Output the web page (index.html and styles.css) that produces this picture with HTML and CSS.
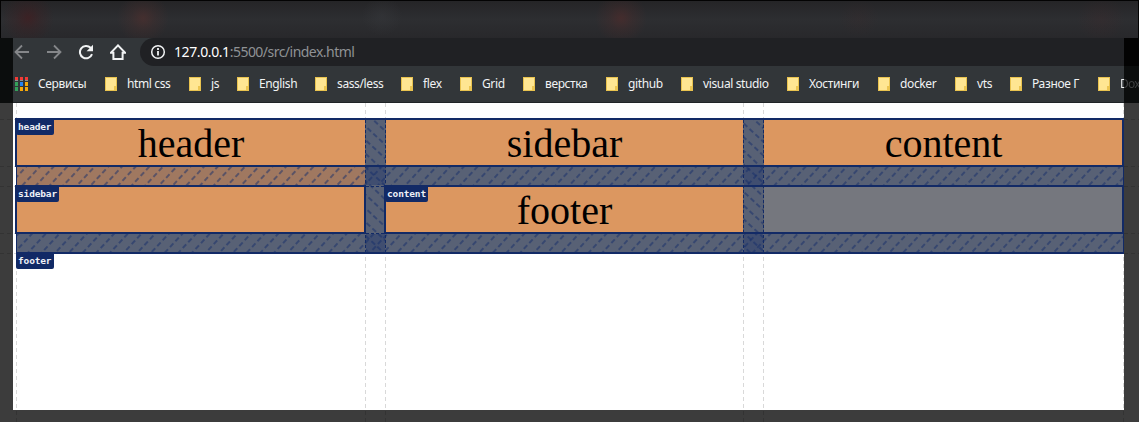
FILE: index.html
```html
<!DOCTYPE html>
<html lang="ru">
<head>
<meta charset="utf-8">
<title>Grid</title>
<link rel="stylesheet" href="styles.css">
</head>
<body>
<div class="screen">
  <div class="tabstrip"></div>
  <div class="stage">
    <div class="side side-left"></div>
    <div class="window">
      <div class="toolbar">
        <svg class="nav" width="16" height="16" viewBox="0 0 16 16" fill="none" stroke="#85878a" stroke-width="1.8"><path d="M15 8H2M8 1.5 1.5 8 8 14.5"/></svg>
        <svg class="nav" width="16" height="16" viewBox="0 0 16 16" fill="none" stroke="#85878a" stroke-width="1.8"><path d="M1 8h13M8 1.5 14.5 8 8 14.5"/></svg>
        <svg class="nav" width="16" height="16" viewBox="0 0 16 16" fill="none" stroke="#f1f3f4" stroke-width="2"><path d="M14 10.2A6.200 6.200 0 1 1 12.600 3.800L14 5.200"/><path d="M15 .8v6.400H8.600z" fill="#f1f3f4" stroke="none"/></svg>
        <svg class="nav" width="16" height="16" viewBox="0 0 16 16" fill="none" stroke="#f1f3f4" stroke-width="2"><path d="M.8 8.800H3.400V15H12.600V8.800H15.200L8 1.400z"/></svg>
        <div class="address">
          <svg width="16" height="16" viewBox="0 0 16 16" fill="none" stroke="#f1f3f4"><circle cx="8" cy="8" r="6.300" stroke-width="1.500"/><path d="M8 7v4.500M8 4v2" stroke-width="1.800"/></svg>
          <span class="url"><b>127.0.0.1</b>:5500/src/index.html</span>
        </div>
      </div>
      <div class="bookmarks">
        <div class="mark services"><svg width="13" height="14" viewBox="0 0 13 14"><path fill="#f23b36" d="M0 0h3v3H0zM5 0h3v3H5zM10 0h3v3h-3z"/><path fill="#8d9092" d="M0 3h3v1H0zM5 3h3v1H5zM10 3h3v1h-3z"/><path fill="#34a05a" d="M0 5h3v4H0zM0 10h3v4H0z"/><path fill="#2685f3" d="M5 5h3v4H5z"/><path fill="#f7a90a" d="M10 5h3v4h-3zM5 10h3v4H5zM10 10h3v4h-3z"/></svg><span>Сервисы</span></div>
        <div class="mark"><i class="folder"></i><span>html css</span></div>
        <div class="mark"><i class="folder"></i><span>js</span></div>
        <div class="mark"><i class="folder"></i><span>English</span></div>
        <div class="mark"><i class="folder"></i><span>sass/less</span></div>
        <div class="mark"><i class="folder"></i><span>flex</span></div>
        <div class="mark"><i class="folder"></i><span>Grid</span></div>
        <div class="mark"><i class="folder"></i><span>верстка</span></div>
        <div class="mark"><i class="folder"></i><span>github</span></div>
        <div class="mark"><i class="folder"></i><span>visual studio</span></div>
        <div class="mark"><i class="folder"></i><span>Хостинги</span></div>
        <div class="mark"><i class="folder"></i><span>docker</span></div>
        <div class="mark"><i class="folder"></i><span>vts</span></div>
        <div class="mark"><i class="folder"></i><span>Разное Г</span></div>
        <div class="mark last"><i class="folder"></i><span>Dox</span></div>
      </div>
      <div class="page">
        <div class="grid">
          <div class="cell">header</div><div></div><div class="cell">sidebar</div><div></div><div class="cell">content</div>
          <div class="gap tinted"></div><div class="gap"></div><div class="gap"></div><div class="gap"></div><div class="gap"></div>
          <div class="cell"></div><div></div><div class="cell">footer</div><div></div><div class="cell muted"></div>
          <div class="gap"></div><div class="gap"></div><div class="gap"></div><div class="gap"></div><div class="gap"></div>
        </div>
      </div>
    </div>
    <div class="side side-right"></div>
  </div>
  <svg class="overlay" width="1139" height="422" viewBox="0 0 1139 422">
    <defs>
      <pattern id="slash" width="10" height="8" patternUnits="userSpaceOnUse" patternTransform="translate(20 166) rotate(43)"><path d="M5 0v5" stroke="#142b68" stroke-opacity=".9" stroke-width="1.1"/></pattern>
      <pattern id="back" width="10" height="8" patternUnits="userSpaceOnUse" patternTransform="translate(365 119) rotate(-47)"><path d="M5 0v5" stroke="#142b68" stroke-opacity=".9" stroke-width="1.1"/></pattern>
    </defs>
    <path fill="#586175" d="M365 120h21v134h-21zM743 120h21v134h-21z"/>
    <path fill="#404e70" d="M366 167h19v18h-19zM366 234h19v18h-19zM744 167h19v18h-19zM744 234h19v18h-19z"/>
    <path fill="url(#slash)" d="M17 167h1106v18H17zM17 234h1106v18H17z"/>
    <path fill="url(#back)" d="M366 120h19v132h-19zM744 120h19v132h-19z"/>
    <g fill="none" stroke="#000" stroke-opacity=".15" stroke-dasharray="4 3">
      <path d="M16.500 103v319M365.500 103v319M385.500 103v319M743.500 103v319M763.500 103v319M1123.500 103v319"/>
      <path d="M0 119.500h16M0 166.500h16M0 186.500h16M0 233.500h16M0 253.500h16M1124 119.500h15M1124 166.500h15M1124 186.500h15M1124 233.500h15M1124 253.500h15"/>
    </g>
    <path fill="none" stroke="#122a66" stroke-dasharray="3 2" d="M365.500 120v134M385.500 120v134M743.500 120v134M763.500 120v134M366 186.500h19M366 233.500h19"/>
    <g fill="none" stroke="#122a66" stroke-width="2">
      <path d="M16 119H1123V166H16zM16 186H365V233H16zM385 186H1123V233H385zM16 253H1124"/>
      <path stroke-width="1" d="M16.500 167v87M1123.500 167v87"/>
    </g>
  </svg>
  <div class="tag tag-header">header</div>
  <div class="tag tag-sidebar">sidebar</div>
  <div class="tag tag-content">content</div>
  <div class="tag tag-footer">footer</div>
</div>
</body>
</html>
```
FILE: styles.css
```css
* { box-sizing: border-box; }
body { margin: 0; background: #3c3c3c; overflow: hidden; }
.screen { position: relative; width: 1139px; height: 422px; display: flex; flex-direction: column; overflow: hidden; }
.tabstrip {
  flex: none; height: 38px; border: 1px solid #030303; border-bottom: 0;
  background:
    radial-gradient(circle at 27px 17px, rgba(70,26,29,.6), rgba(70,26,29,.25) 12px, transparent 26px),
    radial-gradient(circle at 142px 17px, rgba(84,48,46,.6), rgba(84,48,46,.25) 12px, transparent 26px),
    radial-gradient(circle at 381px 15px, rgba(62,64,68,.3), transparent 20px),
    radial-gradient(circle at 620px 17px, rgba(84,44,43,.6), rgba(84,44,43,.25) 12px, transparent 26px),
    radial-gradient(circle at 858px 17px, rgba(70,40,40,.15), transparent 20px),
    radial-gradient(circle at 1100px 18px, rgba(75,40,42,.2), transparent 24px),
    linear-gradient(#252527, #2d2e31 50%, #28282b);
}
.stage { display: flex; height: 372px; }
.side { flex: none; background: linear-gradient(#0b0d0d 65px, #3c3c3c 65px); }
.side-left { width: 13px; }
.side-right { width: 15px; background: linear-gradient(#030303 28px, #0b0d0d 28px, #0b0d0d 65px, #3c3c3c 65px); }
.window { width: 1111px; display: flex; flex-direction: column; background: #323639; }
.toolbar { flex: none; height: 28px; display: flex; align-items: center; padding-left: 1px; }
.nav { flex: none; margin-right: 16px; }
.address { flex: 1; height: 28px; display: flex; align-items: center; gap: 8px; padding-left: 10px; margin-left: -2px; background: #202124; border-radius: 14px 0 0 14px; }
.url { font: 14px/20px "Noto Sans", sans-serif; letter-spacing: -.53px; color: #8f9295; white-space: nowrap; }
.url b { font-weight: 400; color: #fff; letter-spacing: -.4px; }
.bookmarks {
  flex: none; height: 37px; display: grid; align-items: center; padding-left: 2px; border-bottom: 1px solid #202427;
  grid-template-columns: 90px 84px 48px 78px 86px 59px 63px 83px 75px 106px 91px 77px 55px 88px 41px;
}
.mark { display: flex; align-items: center; gap: 10px; white-space: nowrap; color: #f1f3f4; font: 12px/16px "Noto Sans", sans-serif; letter-spacing: -.37px; }
.last { position: relative; }
.last span { letter-spacing: -.8px; color: transparent; background: linear-gradient(90deg, #f1f3f4 4px, #3f4142 4px); background-clip: text; }
.folder { flex: none; width: 12px; height: 14px; background: linear-gradient(#ecc551, #ecc551) right bottom / 2px 4px no-repeat, #ffe692; border: 1px solid #e9c34f; }
.page { flex: 1; background: #fff; padding: 16px 0 0 3px; }
.grid { width: 1108px; display: grid; grid-template-columns: 350px 19px 359px 19px 361px; grid-template-rows: 47px 20px 47px 20px; }
.cell { background: #dc9760; text-align: center; font: 40px/49px "Liberation Serif", serif; height: 47px; color: #000; }
.muted { background: #75777e; }
.gap { background: #586175; }
.tinted { background: #a07860; }
.overlay { position: absolute; left: 0; top: 0; }
.tag { position: absolute; height: 17px; padding: 0 2px; background: #122a66; color: #eef0f6; border-radius: 0 0 2px 2px; font: bold 9.5px/18px "DejaVu Sans Mono", monospace; letter-spacing: -.15px; }
.tag-header { left: 16px; top: 118px; width: 38px; }
.tag-sidebar { left: 16px; top: 185px; width: 43px; }
.tag-content { left: 385px; top: 185px; width: 43px; }
.tag-footer { left: 16px; top: 252px; width: 38px; }
```
